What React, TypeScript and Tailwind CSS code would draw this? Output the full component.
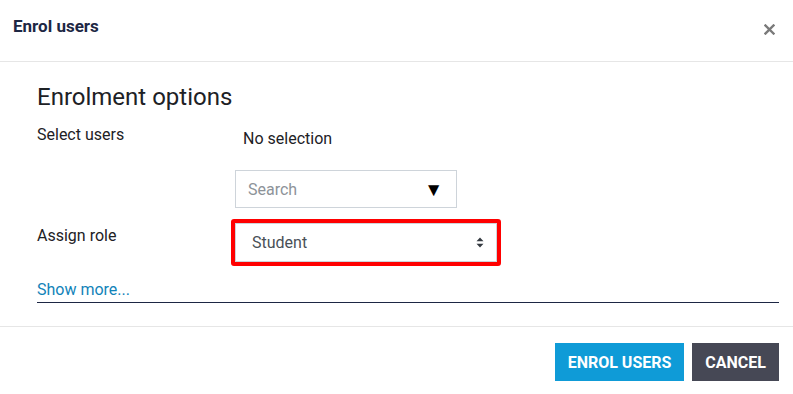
import React from "react";

const App: React.FC = () => {
  return (
    <div className="w-[793px] h-[394px] bg-white font-['Roboto',sans-serif] text-[#1d2125] overflow-hidden">
      {/* Header */}
      <div className="flex items-center justify-between h-[62px] pl-[13px] pr-[18px] border-b border-[#e6e6e6]">
        <h5 className="text-[17px] font-bold text-[#1d2744] -mt-[8px]">Enrol users</h5>
        <svg width="11" height="11" viewBox="0 0 11 11" className="mt-[-2px]">
          <path d="M1.5 1.5 L9.5 9.5 M9.5 1.5 L1.5 9.5" stroke="#7a7a7a" strokeWidth="2.4" strokeLinecap="square" />
        </svg>
      </div>

      {/* Body */}
      <div className="pl-[37px] pr-[14px] pt-[21px] h-[265px] border-b border-[#e6e6e6]">
        <h3 className="text-[24px] leading-[28px] text-[#1d2125]">Enrolment options</h3>

        {/* Select users */}
        <div className="flex mt-[13px]">
          <div className="w-[198px] text-[16px] leading-[22px]">Select users</div>
          <div className="flex flex-col">
            <div className="text-[16px] leading-[22px] pt-[4px] pl-[8px]">No selection</div>
            <div className="mt-[20px] w-[222px] h-[38px] border border-[#ced4da] flex items-center justify-between pl-[12px] pr-[13px] pt-[1px]">
              <span className="text-[16px] text-[#8d9399]">Search</span>
              <span className="text-[19px] text-black leading-none">▼</span>
            </div>
          </div>
        </div>

        {/* Assign role */}
        <div className="flex mt-[11px]">
          <div className="w-[194px] text-[16px] leading-[22px] pt-[6px]">Assign role</div>
          <div className="border-4 border-[#ff0000] rounded-[3px]">
            <div className="w-[262px] h-[39px] border border-[#ced4da] flex items-center justify-between pl-[16px] pr-[12px]">
              <span className="text-[16px] text-[#495057]">Student</span>
              <svg width="8" height="11" viewBox="0 0 8 11">
                <path d="M4 0.5 L7.5 4.3 L0.5 4.3 Z M4 10.5 L7.5 6.7 L0.5 6.7 Z" fill="#343a40" />
              </svg>
            </div>
          </div>
        </div>

        {/* Show more */}
        <div className="mt-[12px] border-b border-[#1d2744]">
          <a href="#" className="text-[16px] leading-[22px] text-[#1283b9]">Show more...</a>
        </div>
      </div>

      {/* Footer */}
      <div className="flex justify-end gap-[8px] pr-[14px] pt-[16px]">
        <button className="w-[129px] h-[38px] pt-[2px] bg-[#0f9bd7] text-white text-[16px] font-bold uppercase">Enrol users</button>
        <button className="w-[87px] h-[38px] pt-[2px] bg-[#464855] text-white text-[16px] font-bold uppercase">Cancel</button>
      </div>
    </div>
  );
};

export default App;
